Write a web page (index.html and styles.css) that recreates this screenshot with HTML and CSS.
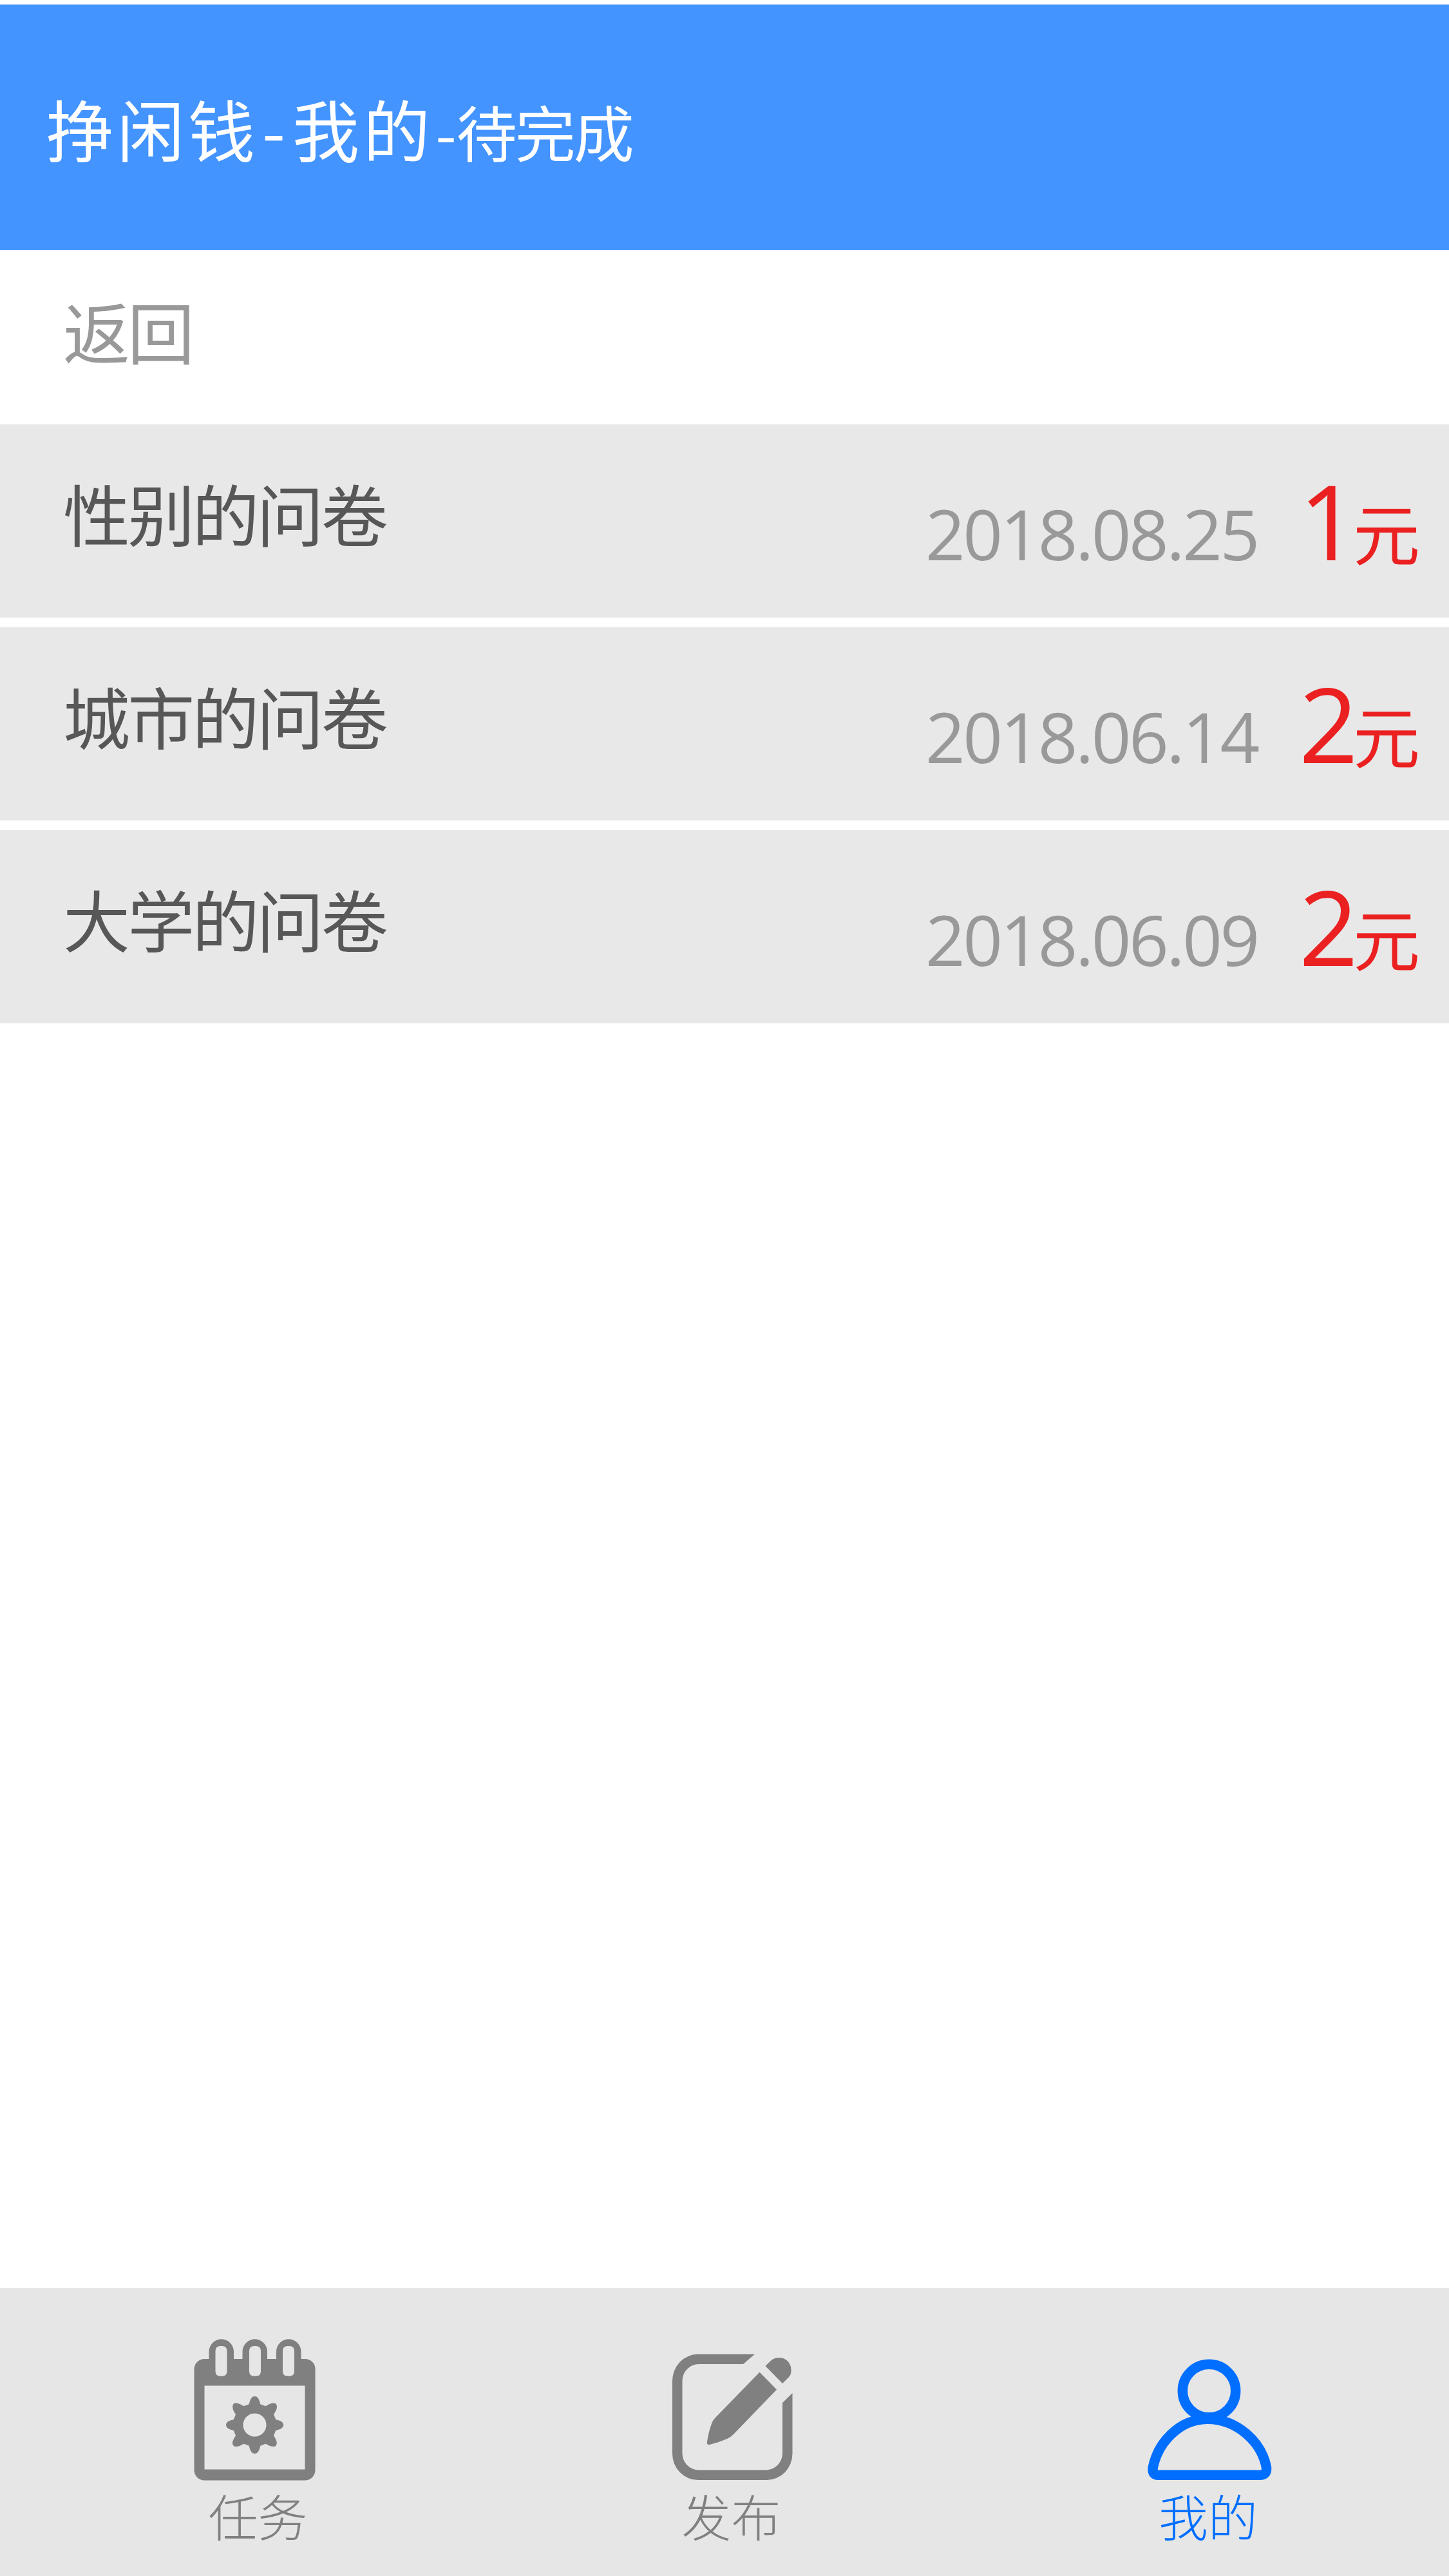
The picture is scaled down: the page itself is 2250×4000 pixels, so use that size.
FILE: index.html
```html
<!DOCTYPE html>
<html lang="zh-CN">
<head>
<meta charset="utf-8">
<title>挣闲钱-我的-待完成</title>
<link rel="stylesheet" href="styles.css">
</head>
<body>
<div class="app">
  <header class="header"><h1 class="title">挣闲钱<span class="dash">-</span>我的<span class="subtitle"><span class="dash">-</span>待完成</span></h1></header>
  <a class="back">返回</a>
  <main class="list">
    <article class="item"><h2 class="name">性别的问卷</h2><time class="date">2018.08.25</time><p class="price"><span class="amount">1</span>元</p></article>
    <article class="item"><h2 class="name">城市的问卷</h2><time class="date">2018.06.14</time><p class="price"><span class="amount">2</span>元</p></article>
    <article class="item"><h2 class="name">大学的问卷</h2><time class="date">2018.06.09</time><p class="price"><span class="amount">2</span>元</p></article>
  </main>
  <nav class="tabs">
    <a class="tab tab-task">
      <svg class="icon" viewBox="0 0 192 222" width="192" height="222">
        <path fill-rule="evenodd" d="M18 32H24.500V20.500a19 19 0 0 1 38.500 0V32H76.500V20.500a19 19 0 0 1 38.500 0V32H129V20.500a19 19 0 0 1 38.500 0V32H174a15.500 15.500 0 0 1 15.500 15.500V204a16 16 0 0 1-16 16.500H17.500A16 16 0 0 1 1.500 204V47.500A16 16 0 0 1 18 32ZM17.500 73.500V203.500H173.500V73.500ZM42 12q-7.500 0-7.500 7.500V51q0 7.500 7.500 7.500h3q7.500 0 7.500-7.500V19.500q0-7.500-7.500-7.500ZM94.500 12q-7.500 0-7.500 7.500V51q0 7.500 7.500 7.500h3q7.500 0 7.500-7.500V19.500q0-7.500-7.500-7.500ZM146.500 12q-7.500 0-7.500 7.500V51q0 7.500 7.500 7.500h3q7.500 0 7.500-7.500V19.500q0-7.500-7.500-7.500Z"/>
        <path transform="translate(0 1)" fill-rule="evenodd" d="M86.700 101.300C88.500 93 91 89 95.500 89S102.500 93 104.300 101.300L112.500 104.300C119.500 100 125.500 98 128.500 101S130 110 125 117L128.200 125C136 126.500 140.200 129.500 140.200 133.500S136 140.500 128.200 142L125 150C130 157.500 131 162.500 128.500 165.500S119.500 167 112.500 162.700L104.300 165.700C102.500 174 100 178 95.500 178S88.500 174 86.700 165.700L78.500 162.700C71.500 167 65.500 168.500 62.500 165.500S61 157.500 66 150L62.800 142C55 140.500 51 137.500 51 133.500S55 126.500 62.800 125L66 117C61 110 60 104 62.500 101S71.500 100 78.500 104.300ZM95.500 115.500a18 18 0 1 0 .01 0Z"/>
      </svg>
      <span class="label">任务</span>
    </a>
    <a class="tab tab-publish">
      <svg class="icon" viewBox="0 0 188 198" width="188" height="198">
        <path d="M129 .500H41A40 42 0 0 0 1 42V155A40 41 0 0 0 41 196H147A40 41 0 0 0 187.500 155V61L172 76V155A26 26 0 0 1 147 180.500H42A26 26 0 0 1 16.500 155V42A26 26 0 0 1 42 16H111Z"/>
        <path d="M136.500 28.500 163 55.500 96 125Q91 130 86 132 72 138 59 141 54 142 55 136 58 118 63 106 64 103 68 99ZM145.500 19 172 46 182 36Q187 31 185 20 182 10 172 6.500 160 4 153 11.500Z"/>
      </svg>
      <span class="label">发布</span>
    </a>
    <a class="tab tab-mine">
      <svg class="icon" viewBox="0 0 194 190" width="194" height="190">
        <g fill="none" stroke="currentColor" stroke-width="15.500">
          <circle cx="96.500" cy="49.500" r="41.200"/>
          <path d="M93 93.300C50 94 17 130 9.300 168.500Q7.500 180.300 18 180.300H176Q186.500 180 185.500 168.500C178 129 140 93 93 93.300Z"/>
        </g>
      </svg>
      <span class="label">我的</span>
    </a>
  </nav>
</div>
</body>
</html>
```
FILE: styles.css
```css
* { box-sizing: border-box; margin: 0; padding: 0; }
body {
  background: #fff;
  font-family: "Noto Sans CJK SC", sans-serif;
}
.app {
  width: 2250px;
  height: 4000px;
  padding-top: 7px;
  display: flex;
  flex-direction: column;
}
.header {
  height: 381px;
  padding: 112px 0 0 72px;
  background: #4394ff;
  color: #fff;
}
.title {
  font-size: 104px;
  line-height: 160px;
  font-weight: 400;
  letter-spacing: 6px;
  white-space: nowrap;
}
.title > .dash { margin: 0 5px; }
.subtitle { font-size: 94px; letter-spacing: -3px; }
.subtitle .dash { margin: 0 3px 0 2px; }
.back {
  height: 271px;
  padding: 45px 0 0 98px;
  font-size: 104px;
  line-height: 160px;
  letter-spacing: -4px;
  color: #999;
}
.list { display: flex; flex-direction: column; gap: 15px; }
.item {
  height: 300px;
  padding: 0 49px 0 98px;
  display: flex;
  background: #e8e8e8;
}
.name {
  flex: 1;
  padding-top: 57px;
  font-size: 104px;
  line-height: 160px;
  font-weight: 400;
  letter-spacing: -3.800px;
  color: #575757;
}
.date {
  width: 580px;
  padding-top: 90px;
  font-family: "Open Sans", "Noto Sans", sans-serif;
  font-size: 108px;
  line-height: 160px;
  letter-spacing: -3.500px;
  color: #999;
}
.price {
  display: flex;
  align-items: baseline;
  padding-top: 69px;
  font-size: 104px;
  line-height: 160px;
  letter-spacing: -4px;
  color: #eb2020;
}
.amount {
  font-family: "Open Sans", "Noto Sans", sans-serif;
  font-size: 161px;
  line-height: 160px;
  letter-spacing: -8px;
}
.tabs {
  height: 447px;
  margin-top: auto;
  padding-left: 25.500px;
  display: grid;
  grid-template-columns: repeat(3, 741px);
  background: #e6e6e6;
}
.tab {
  display: flex;
  flex-direction: column;
  align-items: center;
  justify-content: flex-end;
  padding-bottom: 41px;
  color: #808080;
}
.tab-mine { color: #006eff; }
.icon { display: block; fill: currentColor; }
.label {
  font-size: 77px;
  line-height: 106px;
  font-weight: 300;
}
.tab-task .label { padding-left: 9px; }
.tab-publish .label { padding-right: 3px; }
.tab-mine .label { padding-right: 4px; }
```
